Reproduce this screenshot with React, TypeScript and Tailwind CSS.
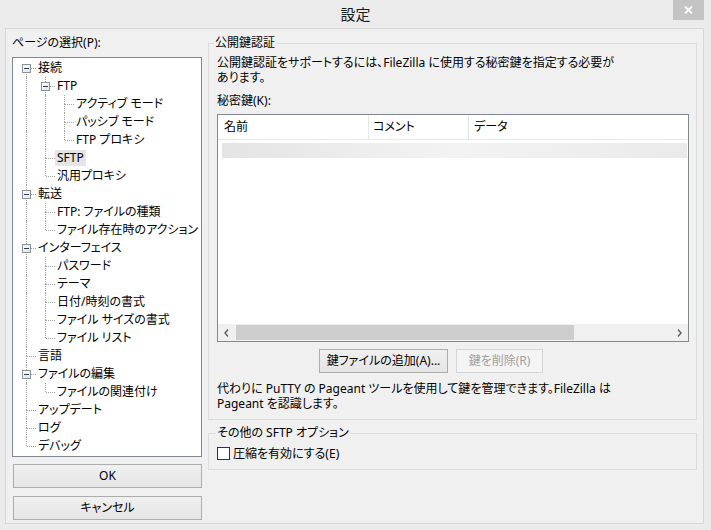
import React from "react"

type Node = { label: string; children?: Node[]; selected?: boolean }

const tree: Node[] = [
  {
    label: "接続",
    children: [
      {
        label: "FTP",
        children: [{ label: "アクティブ モード" }, { label: "パッシブ モード" }, { label: "FTP プロキシ" }],
      },
      { label: "SFTP", selected: true },
      { label: "汎用プロキシ" },
    ],
  },
  { label: "転送", children: [{ label: "FTP: ファイルの種類" }, { label: "ファイル存在時のアクション" }] },
  {
    label: "インターフェイス",
    children: [
      { label: "パスワード" },
      { label: "テーマ" },
      { label: "日付/時刻の書式" },
      { label: "ファイル サイズの書式" },
      { label: "ファイル リスト" },
    ],
  },
  { label: "言語" },
  { label: "ファイルの編集", children: [{ label: "ファイルの関連付け" }] },
  { label: "アップデート" },
  { label: "ログ" },
  { label: "デバッグ" },
]

type Row = {
  label: string
  guides: boolean[]
  first: boolean
  last: boolean
  open: boolean
  selected?: boolean
}

function flatten(nodes: Node[], guides: boolean[] = [], out: Row[] = []) {
  nodes.forEach((n, i) => {
    const last = i === nodes.length - 1
    out.push({
      label: n.label,
      guides,
      first: guides.length === 0 && i === 0,
      last,
      open: !!n.children,
      selected: n.selected,
    })
    if (n.children) flatten(n.children, [...guides, !last], out)
  })
  return out
}

const rows = flatten(tree)

function TreeRow({ row }: { row: Row }) {
  return (
    <div className="flex h-[18px] items-center">
      {row.guides.map((more, i) => (
        <span key={i} className="relative h-full w-[19px] shrink-0">
          {more && <span className="absolute left-[9px] top-0 bottom-0 border-l border-dotted border-[#a0a0a0]" />}
        </span>
      ))}
      <span className="relative h-full w-[19px] shrink-0">
        {!row.first && <span className="absolute left-[9px] top-0 h-[9px] border-l border-dotted border-[#a0a0a0]" />}
        {!row.last && <span className="absolute left-[9px] top-[9px] bottom-0 border-l border-dotted border-[#a0a0a0]" />}
        <span className="absolute left-[10px] top-[9px] w-[9px] border-t border-dotted border-[#a0a0a0]" />
        {row.open && (
          <span className="absolute left-[5px] top-[5px] flex h-[9px] w-[9px] items-center justify-center border border-[#919191] bg-linear-to-br from-white to-[#e4e4e4]">
            <span className="h-px w-[5px] bg-[#1e3f6e]" />
          </span>
        )}
      </span>
      <span
        className={`h-[16px] whitespace-nowrap px-[2px] leading-[16px] text-black ${row.selected ? "bg-[#e5e5e5]" : ""}`}
      >
        {row.label}
      </span>
    </div>
  )
}

function Button({ children, disabled, className }: { children: React.ReactNode; disabled?: boolean; className?: string }) {
  return (
    <div
      className={`flex h-[24px] items-center justify-center border ${
        disabled
          ? "border-[#d5d5d5] bg-[#f4f4f4] text-[#a0a0a0]"
          : "border-[#adadad] bg-linear-to-b from-[#f0f0f0] to-[#e5e5e5] text-black"
      } ${className ?? ""}`}
    >
      {children}
    </div>
  )
}

function Chevron({ dir }: { dir: "left" | "right" }) {
  return (
    <svg width="5" height="8" viewBox="0 0 5 8">
      <path
        d={dir === "left" ? "M4 0.5 L1 4 L4 7.5" : "M1 0.5 L4 4 L1 7.5"}
        fill="none"
        stroke="#606060"
        strokeWidth="1.4"
      />
    </svg>
  )
}

export default function App() {
  return (
    <div className="flex h-[530px] w-[711px] flex-col bg-[#ebebeb] font-['Noto_Sans','Noto_Sans_CJK_JP',sans-serif] text-[12px] text-black [font-feature-settings:'palt']">
      {/* title bar */}
      <div className="grid h-[28px] shrink-0 grid-cols-[1fr_auto_1fr]">
        <div />
        <div className="flex items-center text-[15px] text-[#1a1a1a]">設定</div>
        <div className="flex justify-end">
          <div className="mr-[7px] flex h-[20px] w-[31px] items-center justify-center bg-[#c4c4c4]">
            <svg width="9" height="8" viewBox="0 0 9 8">
              <path d="M1 0.5 L8 7.5 M8 0.5 L1 7.5" stroke="white" strokeWidth="1.8" />
            </svg>
          </div>
        </div>
      </div>

      {/* client */}
      <div className="ml-[5px] flex h-[496px] w-[699px] border border-[#d8d8d8] bg-[#f0f0f0] pl-[6px]">
        {/* left */}
        <div className="flex w-[190px] flex-col pt-[6px]">
          <div className="h-[16px] leading-[16px]">ページの選択(P):</div>
          <div className="mt-[6px] h-[400px] overflow-hidden border border-[#828790] bg-white pl-[4px] pt-[1px]">
            {rows.map((r, i) => (
              <TreeRow key={i} row={r} />
            ))}
          </div>
          <Button className="ml-[1px] mt-[7px] w-[189px]">OK</Button>
          <Button className="ml-[1px] mt-[8px] w-[189px]">キャンセル</Button>
        </div>

        {/* right */}
        <div className="ml-[6px] flex w-[489px] flex-col pt-[6px]">
          <fieldset className="border border-[#dcdcdc] pb-[8px] pl-[8px] pr-[7px]">
            <legend className="-ml-[3px] px-[1px] leading-[16px]">公開鍵認証</legend>
            <div className="pt-[4px] leading-[15px] whitespace-nowrap">
              公開鍵認証をサポートするには、FileZilla に使用する秘密鍵を指定する必要が
              <br />
              あります。
            </div>
            <div className="mt-[8px] leading-[15px]">秘密鍵(K):</div>
            <div className="mt-[6px] flex h-[228px] flex-col border border-[#828790] bg-white">
              <div className="flex h-[25px] shrink-0 items-center border-b border-[#e3e8ee]">
                <div className="flex h-full w-[151px] items-center border-r border-[#e3e8ee] pl-[6px]">名前</div>
                <div className="flex h-full w-[100px] items-center border-r border-[#e3e8ee] pl-[4px]">コメント</div>
                <div className="flex h-full items-center pl-[5px]">データ</div>
              </div>
              <div className="ml-[4px] mr-[1px] mt-[3px] h-[15px] bg-linear-to-r from-[#e4e4e4] via-[#f3f3f3] to-[#eaeaea]" />
              <div className="flex-1" />
              <div className="flex h-[17px] shrink-0 items-center bg-[#f0f0f0]">
                <div className="flex h-full w-[17px] items-center justify-center">
                  <Chevron dir="left" />
                </div>
                <div className="ml-[1px] h-[15px] w-[338px] bg-[#cdcdcd]" />
                <div className="flex-1" />
                <div className="flex h-full w-[17px] items-center justify-center">
                  <Chevron dir="right" />
                </div>
              </div>
            </div>
            <div className="mt-[7px] flex gap-[8px] pl-[102px]">
              <Button className="w-[129px]">鍵ファイルの追加(A)...</Button>
              <Button disabled className="w-[87px]">
                鍵を削除(R)
              </Button>
            </div>
            <div className="mt-[8px] leading-[15px] whitespace-nowrap">
              代わりに PuTTY の Pageant ツールを使用して鍵を管理できます。FileZilla は
              <br />
              Pageant を認識します。
            </div>
          </fieldset>

          <fieldset className="mt-[5px] border border-[#dcdcdc] pb-[9px] pl-[8px] pr-[7px]">
            <legend className="-ml-[1px] px-[1px] leading-[16px]">その他の SFTP オプション</legend>
            <div className="mt-[6px] flex h-[13px] items-center">
              <span className="h-[13px] w-[13px] shrink-0 border border-[#333] bg-white" />
              <span className="ml-[3px] leading-[15px]">圧縮を有効にする(E)</span>
            </div>
          </fieldset>
        </div>
      </div>
    </div>
  )
}
